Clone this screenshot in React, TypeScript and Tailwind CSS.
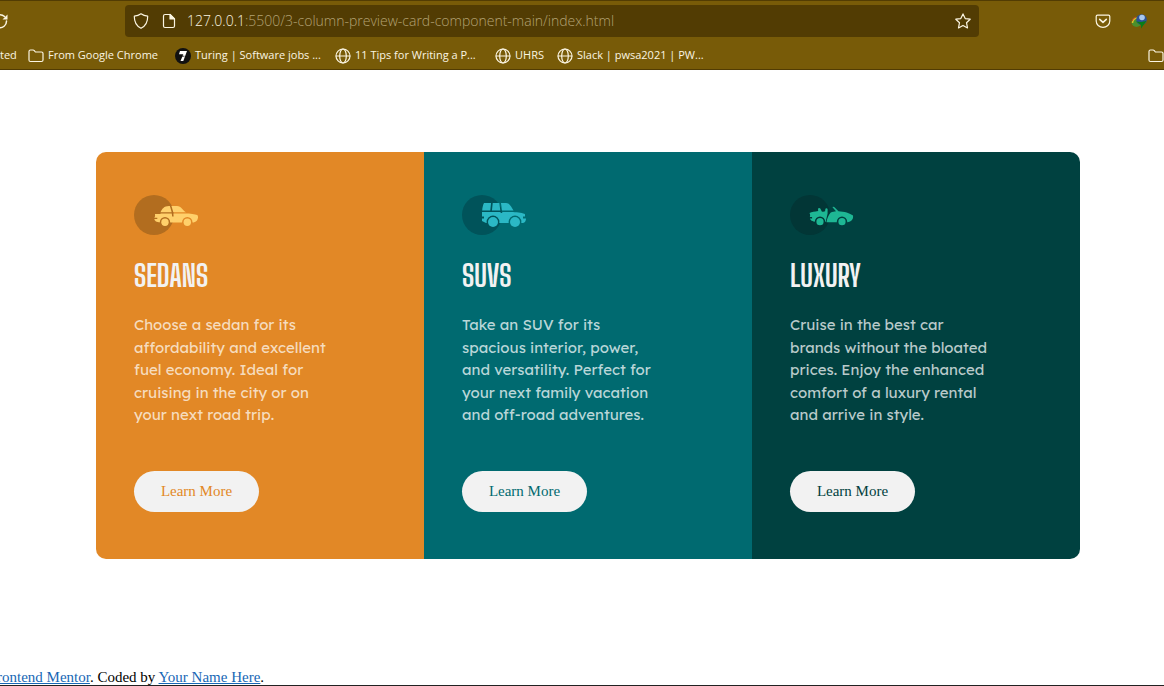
import type { ReactNode } from "react";

type IconProps = { className?: string };

const SedanIcon = () => (
  <svg width="64" height="40" viewBox="0 0 64 40" aria-hidden="true">
    <defs>
      <mask id="sedan-cut">
        <rect width="64" height="40" fill="#fff" />
        <circle cx="31" cy="27.3" r="5.2" fill="#000" />
        <circle cx="53.3" cy="27.3" r="5.2" fill="#000" />
        <path d="M36.3 10c.8 3 2.400 5 2.600 11.500" stroke="#000" strokeWidth="1.500" fill="none" />
      </mask>
    </defs>
    <circle cx="20" cy="20" r="20" fill="#b26d1f" />
    <g fill="#ffd06b">
      <g mask="url(#sedan-cut)">
        <path d="M26.500 17.300C28 14 30 11 35 11h8c4.500 0 5.500 4.500 9 6.300z" />
        <path d="M21 19h5l1-.5h26c5 .3 9.500.8 10.700 2 .6 1.500.3 3.500-.7 5-1.500 1.500-3 2-4.500 2H26c-3.500-.3-5.500-1.500-5.700-3.500h3v-1.300h-3l.8-1.400z" />
      </g>
      <circle cx="31" cy="27.300" r="3.700" />
      <circle cx="53.300" cy="27.300" r="3.700" />
    </g>
  </svg>
);

const SuvIcon = () => (
  <svg width="64" height="40" viewBox="0 0 64 40" aria-hidden="true">
    <defs>
      <mask id="suv-cut">
        <rect width="64" height="40" fill="#fff" />
        <circle cx="31" cy="27" r="6.400" fill="#000" />
        <circle cx="53" cy="27" r="6.400" fill="#000" />
        <path d="M30 7l-1 9.500M38 7l1.500 11" stroke="#000" strokeWidth="1.700" fill="none" />
      </mask>
    </defs>
    <circle cx="20" cy="20" r="20" fill="#00535a" />
    <g fill="#2bb8c5">
      <g mask="url(#suv-cut)">
        <path d="M22 8h22c4 0 5.500 4.500 7.500 7.500H20.200c.2-3 .8-5.500 1.800-7.500z" />
        <path d="M20 17h31c5 .4 10.500 1 12 2.200v2.300h-2v2h3c0 2-1 4.500-3 4.500H24l-4-2v-2.500h2v-2h-2z" />
      </g>
      <circle cx="31" cy="27" r="5" />
      <circle cx="53" cy="27" r="5" />
    </g>
  </svg>
);

const LuxuryIcon = () => (
  <svg width="64" height="40" viewBox="0 0 64 40" aria-hidden="true">
    <defs>
      <mask id="luxury-cut">
        <rect width="64" height="40" fill="#fff" />
        <circle cx="30" cy="26.700" r="5.200" fill="#000" />
        <circle cx="52" cy="26.700" r="5.200" fill="#000" />
      </mask>
    </defs>
    <circle cx="20" cy="20" r="20" fill="#023636" />
    <g fill="#1eb794">
      <g mask="url(#luxury-cut)">
        <path d="M19.500 18c2.500-1 5-1.500 8.700-2l-.2-2.200c.4-1.100 1.700-1.200 2.300-.3l1.500 3c1.200.5 2.300.3 3.300-.2l.3-2.500c.6-.9 1.900-.8 2.200.3v4.400l-2 8.500h-8c-4-.2-7-1-7.700-3.500h2.200V22h-2.300c.5-1.500.5-2.500-.3-4z" />
        <path d="M42.500 12.200c.6-.6 1.400-.4 2 .1l4 4c5.500.2 11.500 2 14.500 4.200.4 2-.3 4-1.500 5-2 1.500-4 1.800-6 1.800H36.500c.3-3.500 2-7 4-9.500 2-1 4-1.300 5.500-1.500z" />
      </g>
      <circle cx="30" cy="26.700" r="3.600" />
      <circle cx="52" cy="26.700" r="3.600" />
    </g>
  </svg>
);

const Stroke = ({ className, children, size = 16 }: IconProps & { children: ReactNode; size?: number }) => (
  <svg
    className={className}
    width={size}
    height={size}
    viewBox="0 0 16 16"
    fill="none"
    stroke="currentColor"
    strokeWidth="1.200"
    strokeLinejoin="round"
    strokeLinecap="round"
    aria-hidden="true"
  >
    {children}
  </svg>
);

const FolderIcon = () => (
  <Stroke className="shrink-0">
    <path d="M1 12V3.500Q1 2 2.500 2h2.600q.7 0 1.200.6L7.400 4H13.500q1.500 0 1.500 1.500V12q0 1.500-1.500 1.500H2.500Q1 13.500 1 12z" />
  </Stroke>
);

const GlobeIcon = () => (
  <Stroke className="shrink-0">
    <circle cx="8" cy="8" r="7" />
    <ellipse cx="8" cy="8" rx="3.300" ry="7" />
    <path d="M1.200 8h13.600" />
  </Stroke>
);

const TuringIcon = () => (
  <svg className="shrink-0" width="16" height="16" viewBox="0 0 16 16" aria-hidden="true">
    <circle cx="8" cy="8" r="8" fill="#111" />
    <path d="M5 3h7L8.300 13H5.500l2.800-6.800H4z" fill="#fff" />
    <path d="M4.500 8.200h5" stroke="#111" strokeWidth=".8" />
  </svg>
);

const bookmarks = [
  { label: "From Google Chrome", icon: <FolderIcon />, width: "w-[147px]" },
  { label: "Turing | Software jobs ...", icon: <TuringIcon />, width: "w-[160px]" },
  { label: "11 Tips for Writing a P...", icon: <GlobeIcon />, width: "w-[160px]" },
  { label: "UHRS", icon: <GlobeIcon />, width: "w-[62px]" },
  { label: "Slack | pwsa2021 | PW...", icon: <GlobeIcon />, width: "w-[160px]" },
];

const BrowserBar = () => (
  <header className="h-[70px] border-y border-[#523c03] bg-[#785b08] font-['Open_Sans','Noto_Sans',sans-serif] text-[#fbf5e2]">
    <div className="flex h-10 items-center">
      <button type="button" aria-label="Reload" className="w-[125px]">
        <Stroke className="-ml-2">
          <path d="M14.500 8A6.500 6.500 0 1 1 12.500 3.500" strokeWidth="1.500" />
          <path d="M15.500 1.500v5h-5z" fill="currentColor" stroke="none" />
        </Stroke>
      </button>
      <div className="flex h-8 flex-1 items-center rounded bg-[#523c03] px-2">
        <Stroke>
          <path d="M8 .8c2 1.500 4 2.200 6.700 2.400C14.800 9 12.500 13 8 15.300 3.500 13 1.200 9 1.300 3.200 4 3 6 2.300 8 .8z" />
        </Stroke>
        <Stroke className="ml-3">
          <path d="M4 1.500h5L13.500 6v7q0 1.500-1.500 1.500H4Q2.500 14.500 2.500 13V3Q2.500 1.500 4 1.500z" />
          <path d="M9 1.500V6h4.500z" fill="currentColor" />
        </Stroke>
        <div className="relative ml-[10px] flex-1 text-sm font-light">
          <input
            aria-label="Address"
            readOnly
            value="127.0.0.1:5500/3-column-preview-card-component-main/index.html"
            className="block w-full bg-transparent text-[#b3a273] outline-none"
          />
          <span aria-hidden="true" className="pointer-events-none absolute left-0 top-0 bg-[#523c03]">
            127.0.0.1
          </span>
        </div>
        <button type="button" aria-label="Bookmark this page">
          <Stroke>
            <path d="M8 .9l2.200 4.700 5 .6-3.700 3.500 1 5.200L8 12.400l-4.500 2.500 1-5.200L.8 6.200l5-.6z" />
          </Stroke>
        </button>
      </div>
      <div className="flex w-[185px] items-center gap-5 pl-[116px]">
        <button type="button" aria-label="Save to Pocket">
          <Stroke>
            <path d="M2.500 2.200h11q1.300 0 1.300 1.300V8A6.800 6.300 0 0 1 1.200 8V3.500q0-1.300 1.300-1.300z" />
            <path d="M4.700 6.300L8 9.300l3.300-3" strokeWidth="1.600" />
          </Stroke>
        </button>
        <button type="button" aria-label="Download manager">
          <svg width="16" height="16" viewBox="0 0 16 16" aria-hidden="true">
            <circle cx="5.500" cy="9" r="5" fill="#4c8f2b" />
            <path d="M1.500 10a5 5 0 0 1 5-5" stroke="#e1bd25" strokeWidth="1.500" fill="none" />
            <path d="M1 8a5 5 0 0 1 4-4" stroke="#c53d24" strokeWidth="1" fill="none" />
            <circle cx="10.500" cy="6.500" r="5.300" fill="#2c5296" />
            <circle cx="11" cy="4.500" r="2.800" fill="#a9c8ee" />
            <path d="M5 8.500l5 .5 5.500-1-5.500 7.500v-3.500z" fill="#087d16" />
          </svg>
        </button>
      </div>
    </div>
    <nav aria-label="Bookmarks" className="flex h-7 items-center overflow-hidden whitespace-nowrap pt-px text-[11px]">
      <a href="#started" className="w-7">
        ted
      </a>
      {bookmarks.map((b) => (
        <a key={b.label} href="#bookmark" className={`${b.width} flex shrink-0 items-center gap-1`}>
          {b.icon}
          {b.label}
        </a>
      ))}
      <a href="#other" aria-label="Other bookmarks" className="ml-auto">
        <FolderIcon />
      </a>
    </nav>
  </header>
);

const cards = [
  {
    title: "Sedans",
    icon: <SedanIcon />,
    text: "Choose a sedan for its\naffordability and excellent\nfuel economy. Ideal for\ncruising in the city or on\nyour next road trip.",
    bg: "bg-[#e28826]",
    body: "text-[#f6dcbe]",
    link: "text-[#e28826]",
  },
  {
    title: "SUVs",
    icon: <SuvIcon />,
    text: "Take an SUV for its\nspacious interior, power,\nand versatility. Perfect for\nyour next family vacation\nand off-road adventures.",
    bg: "bg-[#006a70]",
    body: "text-[#b9d6d8]",
    link: "text-[#006a70]",
  },
  {
    title: "Luxury",
    icon: <LuxuryIcon />,
    text: "Cruise in the best car\nbrands without the bloated\nprices. Enjoy the enhanced\ncomfort of a luxury rental\nand arrive in style.",
    bg: "bg-[#004140]",
    body: "text-[#b9caca]",
    link: "text-[#004140]",
  },
];

export default function App() {
  return (
    <div className="flex min-h-screen flex-col overflow-x-hidden bg-white">
      <BrowserBar />
      <main className="pb-12 pl-24 pr-[84px] pt-[82px]">
        <div className="grid grid-cols-3 overflow-hidden rounded-[10px]">
          {cards.map((c) => (
            <section key={c.title} className={`${c.bg} flex flex-col items-start px-[38px] pb-[47px] pt-[43px]`}>
              {c.icon}
              <h2 className="mt-5 font-['Big_Shoulders_Display',sans-serif] text-[30px] font-bold uppercase leading-10 text-[#f2f2f2]">
                {c.title}
              </h2>
              <p className={`${c.body} mt-[19px] whitespace-pre font-['Lexend_Deca',Inter,sans-serif] text-[15px] leading-normal`}>
                {c.text}
              </p>
              <button
                type="button"
                className={`${c.link} mt-11 h-[41px] w-[125px] rounded-full bg-[#f2f2f2] font-['Liberation_Serif',serif] text-[15px]`}
              >
                Learn More
              </button>
            </section>
          ))}
        </div>
      </main>
      <footer className="mt-auto h-[18px] whitespace-nowrap border-b border-[#222] font-['Liberation_Serif',serif] text-[15px] leading-[18px] text-black">
        <p className="-ml-[3px]">
          <a href="#mentor" className="text-[#1767b5] underline">
            rontend Mentor
          </a>
          . Coded by{" "}
          <a href="#author" className="text-[#1767b5] underline">
            Your Name Here
          </a>
          .
        </p>
      </footer>
    </div>
  );
}
